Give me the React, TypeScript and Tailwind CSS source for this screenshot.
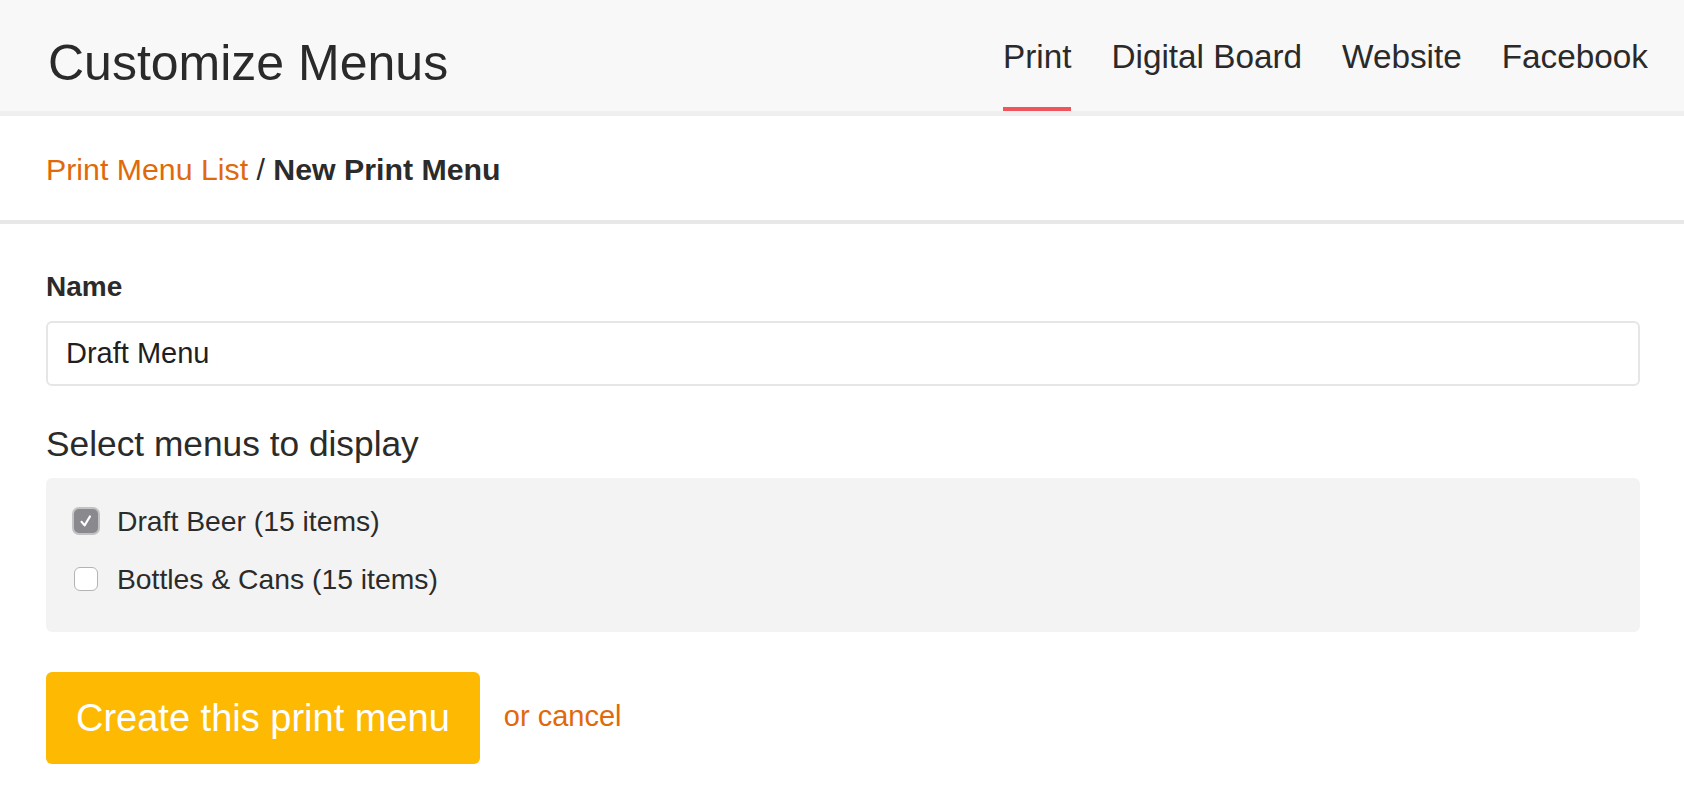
export default function App() {
  const tabs = ["Print", "Digital Board", "Website", "Facebook"];

  return (
    <div className="min-h-[810px] bg-white font-['Liberation_Sans',Arial,sans-serif] text-[#2b2b2b]">
      {/* Top header */}
      <header className="flex h-[111px] items-start justify-between bg-[#f8f8f8] pl-[48px] pr-[36px]">
        <h1 className="pt-[38px] text-[50px] leading-[50px] font-normal text-[#2a2a2a]">
          Customize Menus
        </h1>
        <nav className="flex h-full gap-[40px]">
          {tabs.map((t) => (
            <a
              key={t}
              className={
                "flex h-full flex-col border-b-4 pt-[40px] text-[33.3px] leading-[33px] text-[#2a2a2a] " +
                (t === "Print" ? "border-[#f0545c]" : "border-transparent")
              }
            >
              {t}
            </a>
          ))}
        </nav>
      </header>
      <div className="h-[5px] bg-[#efefef]" />

      {/* Breadcrumb */}
      <div className="h-[104px] pl-[46px] pt-[39px] text-[30.3px] leading-[30px]">
        <a className="text-[#e06a0b]">Print Menu List</a>
        <span className="text-[#2b2b2b]"> / </span>
        <span className="font-bold text-[#2b2b2b]">New Print Menu</span>
      </div>
      <div className="h-[4px] bg-[#e8e8e8]" />

      {/* Form */}
      <div className="pl-[46px] pr-[44px] pt-[49px]">
        <label className="block text-[28px] leading-[28px] font-bold text-[#2b2b2b]">Name</label>
        <input
          defaultValue="Draft Menu"
          className="mt-[20px] block h-[65px] w-full rounded-[6px] border-2 border-[#e6e6e6] bg-white px-[18px] text-[29px] leading-[29px] text-[#1f1f1f] outline-none"
        />

        <div className="mt-[40px] text-[35.3px] leading-[35px] text-[#2b2b2b]">Select menus to display</div>

        <div className="mt-[17px] flex flex-col gap-[30px] rounded-[6px] bg-[#f3f3f3] pb-[39px] pl-[26px] pt-[29px]">
          <label className="flex items-center gap-[17px] text-[28.3px] leading-[28px]">
            <span className="flex h-[28px] w-[28px] items-center justify-center rounded-[7px] border-2 border-[#c2c2c4] bg-[#8a8a8e]">
              <svg width="22" height="22" viewBox="0 0 22 22" fill="none">
                <path d="M6.5 11.8 L9.6 15.4 L15 6.4" stroke="white" strokeWidth="2.1" strokeLinecap="round" strokeLinejoin="round" />
              </svg>
            </span>
            <span>Draft Beer (15 items)</span>
          </label>
          <label className="flex items-center gap-[17px] text-[28.3px] leading-[28px]">
            <span className="flex h-[28px] w-[28px] items-center justify-center">
              <span className="h-[24px] w-[24px] rounded-[6px] border-[1.5px] border-[#b3b3b3] bg-white" />
            </span>
            <span>Bottles &amp; Cans (15 items)</span>
          </label>
        </div>

        <div className="mt-[40px] flex items-center gap-[24px]">
          <button className="h-[92px] rounded-[6px] bg-[#feb902] px-[30px] text-[38px] leading-[38px] text-white">
            Create this print menu
          </button>
          <a className="-mt-[3px] text-[29px] leading-[29px] text-[#e06a0b]">or cancel</a>
        </div>
      </div>
    </div>
  );
}
